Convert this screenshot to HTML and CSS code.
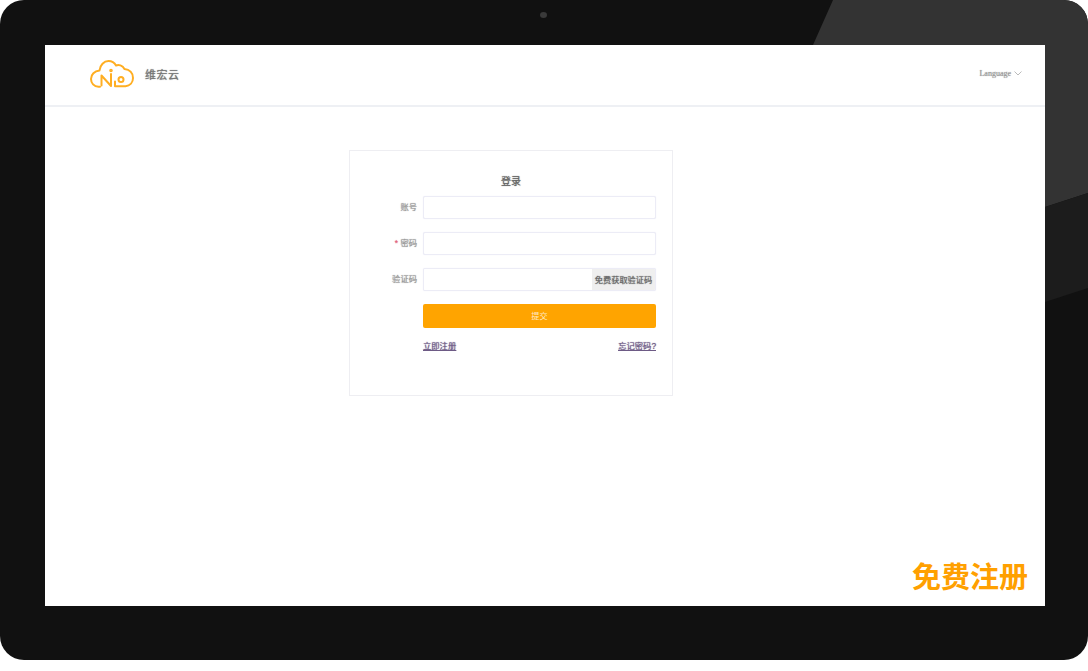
FILE: index.html
```html
<!DOCTYPE html>
<html lang="zh-CN">
<head>
    <meta charset="UTF-8">
    <title>维宏云</title>
    <link rel="stylesheet" href="styles.css">
</head>
<body>

    <div class="device">
        <!-- glare on the bezel -->
        <svg class="glare" width="1088" height="660" viewBox="0 0 1088 660">
            <path d="M833 0H1064Q1088 0 1088 24V193L1045 207V45H813Z" fill="#333"/>
            <path d="M1045 207L1088 193V288L1045 302Z" fill="#1c1c1c"/>
        </svg>
        <div class="camera"></div>

        <div class="screen">
            <div class="top-bar">
                <div class="brand">
                    <svg class="logo" width="44" height="28" viewBox="0 0 44 28" fill="none" stroke="#ffae22" stroke-width="2" stroke-linecap="round" stroke-linejoin="round">
                        <path d="M10 26.700H8.500C4 26.700 1 23 1 19C1 14.500 4.500 11 9.500 10.500C10 5 14 1 18.500 1C22 1 24.500 2.800 26 5.500C28.500 4.500 32.500 5 34.500 9C39.500 9.500 43 13 43 18C43 22.500 40 25.800 35.500 26.200H25V21.500"/>
                        <path d="M11.500 25.500V15.500L21 26V14"/>
                        <circle cx="21" cy="10.500" r="0.800"/>
                        <circle cx="31" cy="19.500" r="2.500"/>
                    </svg>
                    <span class="brand-name">维宏云</span>
                </div>
                <div class="lang">
                    <span>Language</span>
                    <svg width="8" height="5" viewBox="0 0 8 5" fill="none" stroke="#aaa" stroke-width="0.800"><path d="M0.500 0.500L4 4L7.500 0.500"/></svg>
                </div>
            </div>

            <div class="login-box">
                <div class="login-title">登录</div>
                <div class="form-row">
                    <label class="form-label">账号</label>
                    <input class="form-input" type="text">
                </div>
                <div class="form-row">
                    <label class="form-label"><span class="req">*</span> 密码</label>
                    <input class="form-input" type="password">
                </div>
                <div class="form-row">
                    <label class="form-label">验证码</label>
                    <div class="code-group">
                        <input class="code-input" type="text">
                        <div class="code-btn">免费获取验证码</div>
                    </div>
                </div>
                <div class="form-row">
                    <div class="form-label"></div>
                    <button class="submit-btn">提交</button>
                </div>
                <div class="link-row">
                    <a class="link" href="#">立即注册</a>
                    <a class="link" href="#">忘记密码?</a>
                </div>
            </div>

            <div class="free-reg">免费注册</div>
        </div>
    </div>

</body>
</html>
```

FILE: styles.css
```css
body {
    margin: 0;
    background-color: #fff;
    font-family: "Liberation Sans", "Noto Sans CJK SC", sans-serif;
}

.device {
    position: relative;
    box-sizing: border-box;
    width: 1088px;
    height: 660px;
    padding: 45px 43px 54px 45px;
    background-color: #111;
    border-radius: 24px;
    overflow: hidden;
}

.glare {
    position: absolute;
    top: 0;
    left: 0;
}

.camera {
    position: absolute;
    top: 12px;
    left: 540px;
    width: 7px;
    height: 6px;
    border-radius: 50%;
    background-color: #3a3a3a;
}

.screen {
    position: relative;
    height: 100%;
    background-color: #fff;
}

/* the screenshot on the device is a scaled down picture, so its text is soft */
.top-bar, .login-box {
    text-shadow: 0 0 1px currentColor;
}

.top-bar {
    display: flex;
    align-items: center;
    justify-content: space-between;
    height: 60px;
    padding: 0 23px 0 45px;
    border-bottom: 2px solid #eef0f4;
}

.brand {
    display: flex;
    align-items: center;
    gap: 11px;
    margin-top: -2px;
}

.brand-name {
    font-size: 11px;
    letter-spacing: 0.5px;
    color: #777;
}

.lang {
    display: flex;
    align-items: center;
    gap: 3px;
    margin-top: -4px;
    font-family: "Liberation Serif", serif;
    font-size: 8px;
    color: #999;
}

.login-box {
    box-sizing: border-box;
    width: 324px;
    height: 246px;
    margin: 43px 0 0 304px;
    padding: 25px 16px 0 0;
    border: 1px solid #eeeef2;
}

.login-title {
    margin-bottom: 8px;
    padding-left: 16px;
    text-align: center;
    font-size: 10px;
    line-height: 12px;
    color: #666;
}

.form-row {
    display: flex;
    align-items: center;
    gap: 6px;
    height: 23px;
    margin-bottom: 13px;
}

.form-label {
    flex: 0 0 67px;
    margin-top: -4px;
    text-align: right;
    font-size: 8.300px;
    color: #999;
}

.req {
    color: #e0607a;
}

.form-input, .code-group {
    box-sizing: border-box;
    flex: 1;
    min-width: 0;
    height: 23px;
    border: 1px solid #ececf6;
    border-radius: 2px;
    background-color: #fff;
    box-shadow: 0 0 1px #e6e6f4;
}

.code-group {
    display: flex;
    overflow: hidden;
}

.code-input {
    flex: 1;
    min-width: 0;
    border: none;
    padding: 0;
}

.code-btn {
    display: flex;
    align-items: center;
    justify-content: center;
    width: 63px;
    padding-bottom: 2px;
    background-color: #efefef;
    font-size: 8.200px;
    color: #666;
}

.submit-btn {
    flex: 1;
    height: 24px;
    padding: 0 0 2px;
    border: none;
    border-radius: 2px;
    background-color: #ffa400;
    font-family: inherit;
    font-size: 8.200px;
    color: #ffe9c4;
}

.link-row {
    display: flex;
    justify-content: space-between;
    margin: 2px 0 0 73px;
}

.link {
    font-size: 8.300px;
    line-height: 12px;
    color: #6d5a85;
}

.free-reg {
    position: absolute;
    right: 17px;
    bottom: 9px;
    font-size: 29px;
    line-height: 38px;
    font-weight: bold;
    color: #ffa000;
}
```
